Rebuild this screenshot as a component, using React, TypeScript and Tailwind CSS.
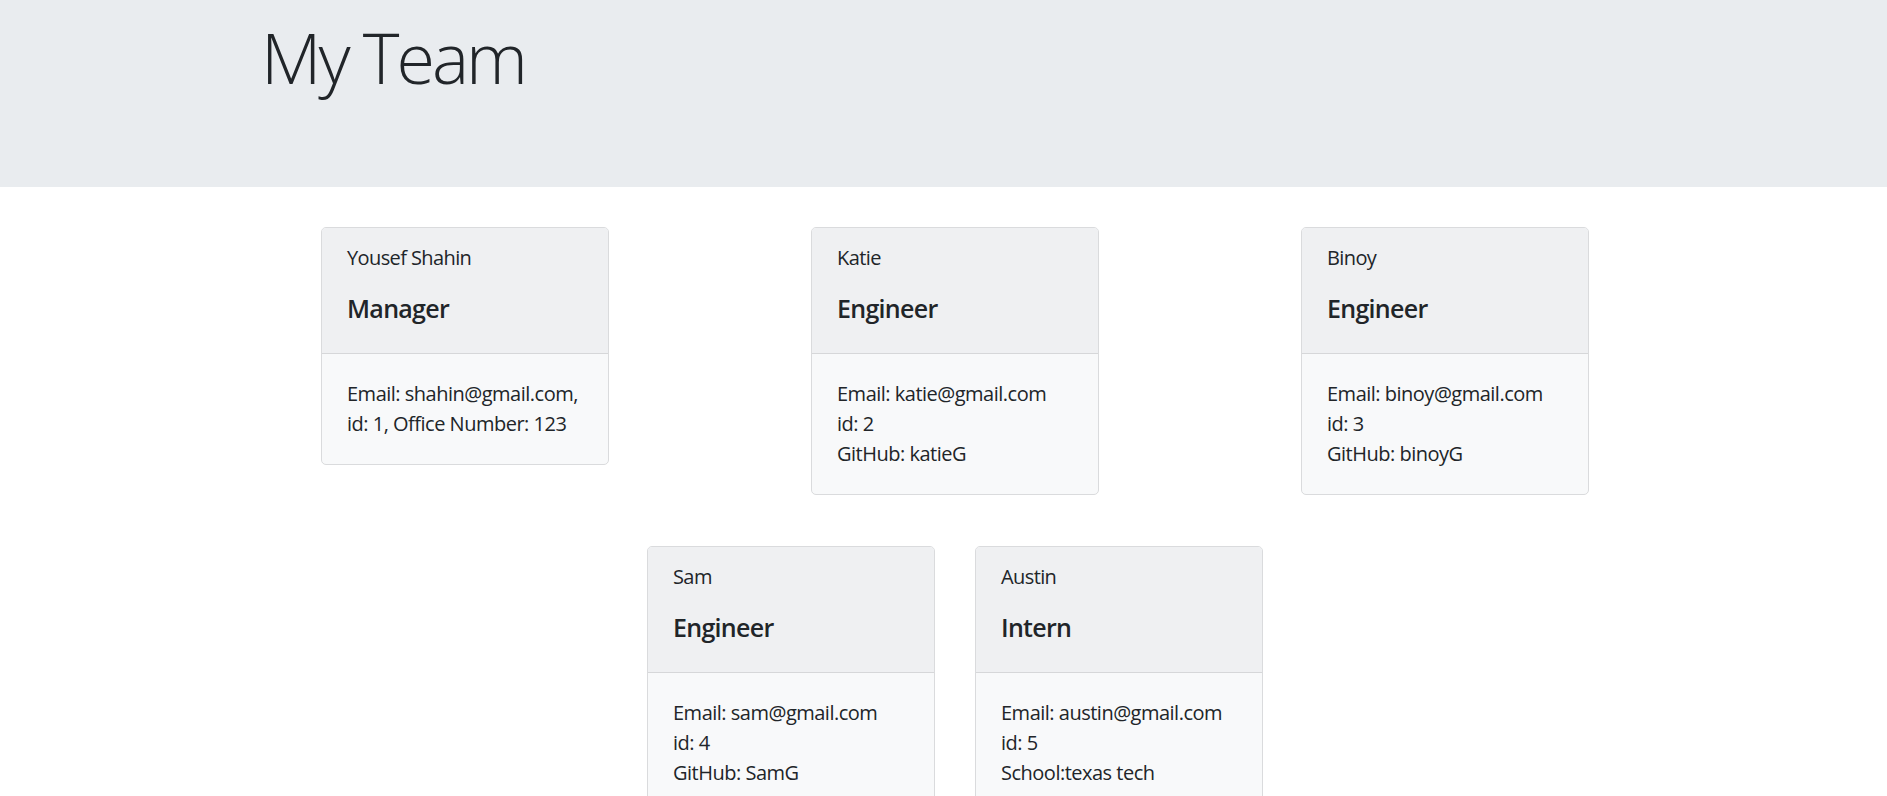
import React from "react";

type Member = {
  name: string;
  role: string;
  lines: string[];
};

const row1: Member[] = [
  {
    name: "Yousef Shahin",
    role: "Manager",
    lines: ["Email: shahin@gmail.com,", "id: 1, Office Number: 123"],
  },
  {
    name: "Katie",
    role: "Engineer",
    lines: ["Email: katie@gmail.com", "id: 2", "GitHub: katieG"],
  },
  {
    name: "Binoy",
    role: "Engineer",
    lines: ["Email: binoy@gmail.com", "id: 3", "GitHub: binoyG"],
  },
];

const row2: Member[] = [
  {
    name: "Sam",
    role: "Engineer",
    lines: ["Email: sam@gmail.com", "id: 4", "GitHub: SamG"],
  },
  {
    name: "Austin",
    role: "Intern",
    lines: ["Email: austin@gmail.com", "id: 5", "School:texas tech"],
  },
];

function Card({ m }: { m: Member }) {
  return (
    <div className="w-[288px] shrink-0 self-start overflow-hidden rounded-[5px] border border-[#dadbdd] bg-[#f8f9fa]">
      <div className="border-b border-[#d6d7d9] bg-[#eff0f2] px-[25px] pt-[15px] pb-[15px]">
        <p className="mb-[20px] text-[20px] leading-[30px] tracking-[-0.6px]">{m.name}</p>
        <h5 className="mb-[15px] text-[25px] font-semibold leading-[30px] tracking-[-0.7px]">{m.role}</h5>
      </div>
      <div className="p-[25px] text-[20px] leading-[30px] tracking-[-0.5px]">
        {m.lines.map((l, i) => (
          <p key={i} className="whitespace-nowrap">
            {l}
          </p>
        ))}
      </div>
    </div>
  );
}

export default function App() {
  return (
    <div
      className="min-h-screen bg-white text-[#212529]"
      style={{ fontFamily: '"Open Sans", "Noto Sans", sans-serif' }}
    >
      <div className="h-[187px] bg-[#e9ecef] pl-[261px] pt-[15px]">
        <h1 className="text-[70px] font-light leading-[84px] tracking-[-3px]">My Team</h1>
      </div>
      <div className="pl-[23px] pt-[40px]">
        <div className="flex justify-center gap-[202px]">
          {row1.map((m) => (
            <Card key={m.name} m={m} />
          ))}
        </div>
        <div className="mt-[51px] flex justify-center gap-[40px]">
          {row2.map((m) => (
            <Card key={m.name} m={m} />
          ))}
        </div>
      </div>
    </div>
  );
}
